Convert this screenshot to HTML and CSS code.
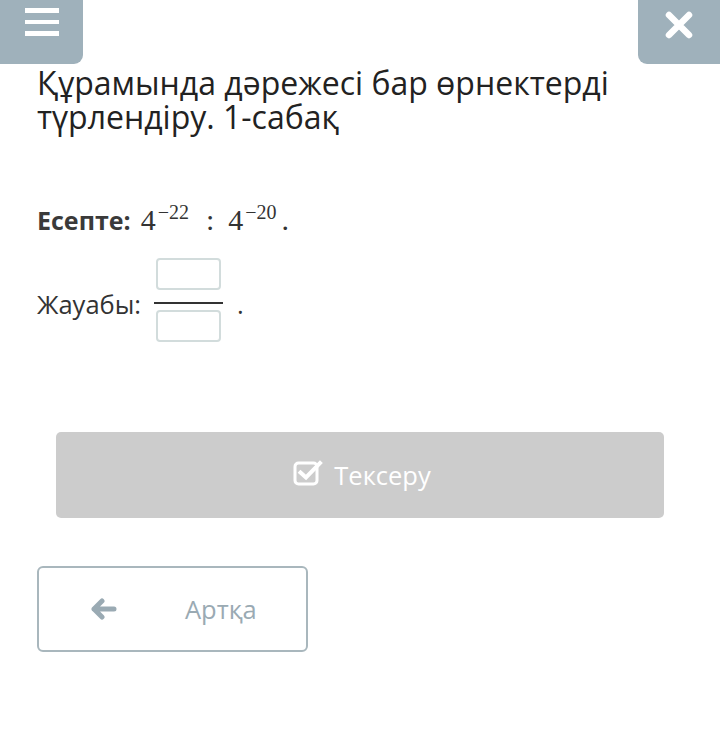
FILE: index.html
```html
<!DOCTYPE html>
<html lang="kk">
<head>
<meta charset="utf-8">
<link rel="stylesheet" href="styles.css">
</head>
<body>
<div class="topbar">
  <button class="tab tab-left" aria-label="menu">
    <span class="bars"><i></i><i></i><i></i></span>
  </button>
  <button class="tab tab-right" aria-label="close">
    <svg width="30" height="30" viewBox="0 0 30 30"><path d="M5 5 L25 25 M25 5 L5 25" stroke="#fff" stroke-width="6.5" stroke-linecap="round"/></svg>
  </button>
</div>
<main class="content">
  <h1 class="title">Құрамында дәрежесі бар өрнектерді түрлендіру. 1-сабақ</h1>
  <div class="task"><b>Есепте:</b><span class="math"><span class="base">4</span><sup>−22</sup><span class="colon">:</span><span class="base">4</span><sup>−20</sup><span class="mdot">.</span></span></div>
  <div class="answer">
    <span class="label">Жауабы:</span>
    <span class="frac">
      <span class="box"></span>
      <span class="line"></span>
      <span class="box box-bottom"></span>
    </span>
    <span class="dot">.</span>
  </div>
  <div class="check-wrap">
    <button class="check">
      <svg width="30" height="28" viewBox="0 0 30 28"><rect x="2" y="5" width="22" height="21" rx="3.5" fill="none" stroke="#fff" stroke-width="3"/><path d="M7.5 14.5 L13 19.5 L27 5" fill="none" stroke="#fff" stroke-width="4" stroke-linecap="square"/></svg>
      <span>Тексеру</span>
    </button>
  </div>
  <button class="back">
    <svg width="28" height="22" viewBox="0 0 28 22"><path d="M13 3 L5 11 L13 19 M5 11 L25 11" fill="none" stroke="#9aaab3" stroke-width="5" stroke-linecap="round" stroke-linejoin="round"/></svg>
    <span>Артқа</span>
  </button>
</main>
</body>
</html>
```
FILE: styles.css
```css
html, body { margin: 0; padding: 0; background: #fff; }
body { width: 720px; height: 733px; font-family: "Open Sans", "Noto Sans", sans-serif; color: #333; overflow: hidden; }
.topbar { display: flex; justify-content: space-between; height: 64px; }
.tab { border: none; background: #9fb1bb; width: 82px; height: 64px; padding: 0; display: flex; align-items: center; justify-content: center; }
.tab-left { border-bottom-right-radius: 9px; width: 83px; }
.tab-right { border-bottom-left-radius: 9px; }
.bars { display: flex; flex-direction: column; gap: 7px; margin-top: -20px; }
.bars i { display: block; width: 34px; height: 4.5px; background: #fff; }
.tab-right svg { margin-top: -14px; }
.content { padding: 0 37px; }
.title { font-weight: 400; font-size: 32px; line-height: 34px; margin: 2px 0 0; color: #222; }
.task { margin-top: 71px; font-size: 25px; line-height: 30px; display: flex; align-items: baseline; }
.task b { font-weight: 700; color: #3a3a3a; }
.math { font-family: "Liberation Serif", "DejaVu Serif", serif; font-size: 30px; color: #333; margin-left: 10px; display: inline-flex; align-items: baseline; }
.math sup { font-size: 20px; line-height: 0; position: relative; top: -11px; vertical-align: baseline; margin-left: 2px; }
.colon { margin: 0 14px 0 17px; }
.mdot { margin-left: 5px; }
.answer { margin-top: 23px; display: flex; align-items: center; font-size: 25.5px; color: #333; }
.label { margin-right: 13px; margin-top: 8px; }
.frac { display: flex; flex-direction: column; align-items: center; width: 69px; }
.box { width: 61px; height: 28px; border: 2px solid #d2dcdc; border-radius: 4px; box-sizing: content-box; }
.line { width: 69px; height: 2px; background: #333; margin: 12px 0 6px; }
.dot { margin-left: 14px; margin-top: 8px; }
.check-wrap { margin-top: 90px; padding-left: 19px; padding-right: 19px; }
.check { width: 608px; height: 86px; border: none; border-radius: 5px; background: #cccccc; color: #fff; font-family: "Open Sans", sans-serif; font-size: 25.5px; display: flex; align-items: center; justify-content: center; gap: 11px; padding: 0 0 0 4px; }
.check svg { margin-top: -6px; }
.back { margin-top: 48px; width: 271px; height: 86px; border: 2px solid #a9b7bd; border-radius: 6px; background: #fff; display: flex; align-items: center; padding: 0 0 0 50px; box-sizing: border-box; font-family: "Open Sans", sans-serif; font-size: 25.5px; color: #9aaab3; }
.back svg { margin-right: 68px; }
```
